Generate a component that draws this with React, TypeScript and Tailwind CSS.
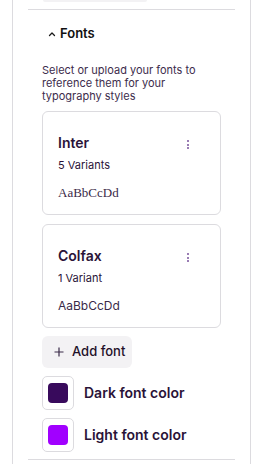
import React from "react";

function Dots() {
  return (
    <div className="flex flex-col gap-[1.5px] pt-[1px]">
      <span className="block w-[2px] h-[2px] bg-[#9a7db4]" />
      <span className="block w-[2px] h-[2px] bg-[#9a7db4]" />
      <span className="block w-[2px] h-[2px] bg-[#9a7db4]" />
    </div>
  );
}

function FontCard({ name, variants, serif }: { name: string; variants: string; serif?: boolean }) {
  return (
    <div className="w-[179px] h-[104px] rounded-[6px] border border-[#dcdbdf] bg-white pl-[15px] pr-[31px] pt-[21px]">
      <div className="flex items-start justify-between">
        <div className="text-[14px] leading-[20px] font-semibold text-[#2a1338]">{name}</div>
        <div className="pt-[6px]">
          <Dots />
        </div>
      </div>
      <div className="mt-[4px] text-[11px] leading-[16px] text-[#2a1338]">{variants}</div>
      <div
        className="mt-[12px] text-[12px] leading-[16px] text-[#3a2a48]"
        style={serif ? { fontFamily: '"Liberation Serif", "Times New Roman", serif', fontSize: 13 } : undefined}
      >
        AaBbCcDd
      </div>
    </div>
  );
}

function Swatch({ color, label }: { color: string; label: string }) {
  return (
    <div className="flex items-center">
      <div className="w-[32px] h-[34px] rounded-[5px] border border-[#dcdbdf] bg-white flex items-center justify-center">
        <div className="w-[20px] h-[20px] rounded-[4px]" style={{ backgroundColor: color }} />
      </div>
      <div className="ml-[10px] text-[14px] leading-[20px] font-semibold text-[#2a1338]">{label}</div>
    </div>
  );
}

export default function App() {
  return (
    <div
      className="w-[277px] h-[464px] bg-white overflow-hidden"
      style={{ fontFamily: 'Inter, "Noto Sans", sans-serif' }}
    >
      <div className="ml-[12px] w-[239px] h-[464px] border-x border-[#dcdbdf] px-[15px]">
        <div className="ml-[15px] w-[104px] h-[2px] rounded-b-[4px] bg-[#f3f2f4]" />
        <div className="mt-[7px] h-px bg-[#dcdbdf]" />
        <div className="px-[14px]">
          <div className="mt-[12px] h-[24px] flex items-center">
            <svg width="8" height="6" viewBox="0 0 8 6" className="ml-[6px]">
              <path d="M1.5 4.5 L4 2 L6.5 4.5" fill="none" stroke="#1a1a1a" strokeWidth="1.3" strokeLinecap="round" strokeLinejoin="round" />
            </svg>
            <span className="ml-[4px] text-[13px] font-semibold text-[#111]">Fonts</span>
          </div>
          <div className="mt-[18px] text-[11px] leading-[13px] text-[#3d2c4c]">
            Select or upload your fonts to
            <br />
            reference them for your
            <br />
            typography styles
          </div>
          <div className="mt-[8px] flex flex-col gap-[9px]">
            <FontCard name="Inter" variants="5 Variants" serif />
            <FontCard name="Colfax" variants="1 Variant" />
          </div>
          <div className="mt-[8px] w-[90px] h-[32px] rounded-[6px] bg-[#f3f2f4] flex items-center pl-[12px]">
            <svg width="10" height="10" viewBox="0 0 10 10">
              <path d="M5 0.5 V9.5 M0.5 5 H9.5" stroke="#3a2a48" strokeWidth="1.2" />
            </svg>
            <span className="ml-[8px] text-[13px] font-medium text-[#1f1029]">Add font</span>
          </div>
          <div className="mt-[8px] flex flex-col gap-[8px]">
            <Swatch color="#380a5c" label="Dark font color" />
            <Swatch color="#a100ff" label="Light font color" />
          </div>
        </div>
        <div className="mt-[7px] h-px bg-[#dcdbdf]" />
      </div>
    </div>
  );
}
